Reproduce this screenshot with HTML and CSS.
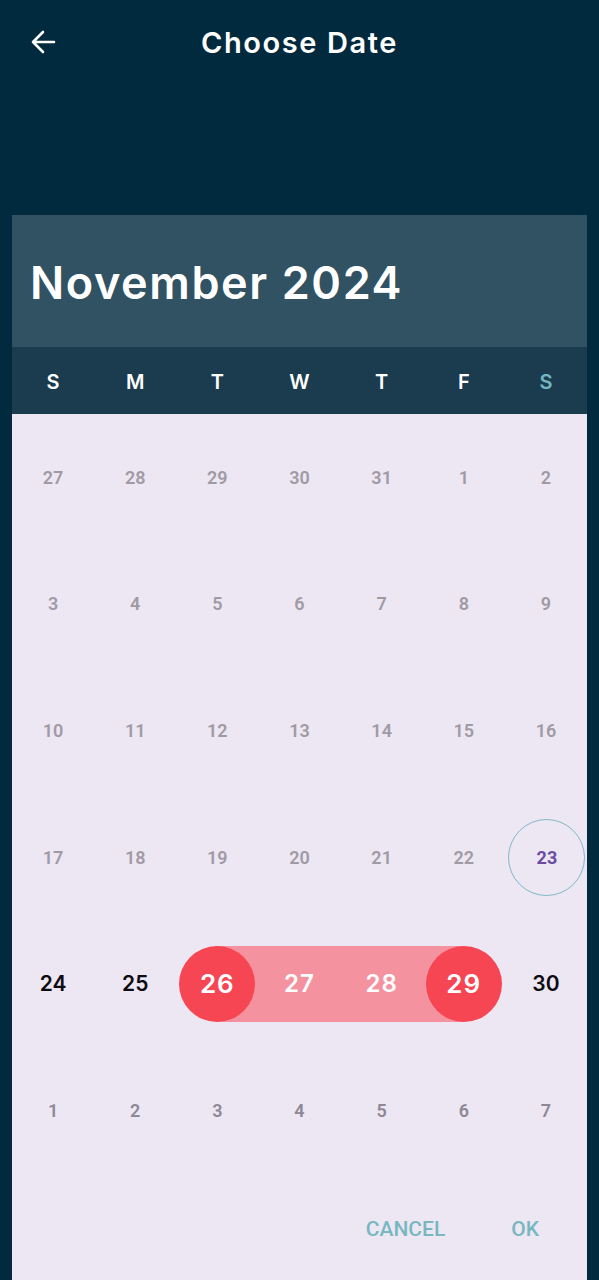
FILE: index.html
```html
<!DOCTYPE html>
<html>
<head>
<meta charset="utf-8">
<link rel="stylesheet" href="styles.css">
</head>
<body>
<div class="appbar">
  <svg class="back" width="26" height="24" viewBox="0 0 26 24"><path d="M24 12H3M13 2L3 12l10 10" fill="none" stroke="#fff" stroke-width="2.6" stroke-linecap="round" stroke-linejoin="round"/></svg>
  <div class="title">Choose Date</div>
</div>
<div class="dialog">
  <div class="header">November 2024</div>
  <div class="weekdays">
    <span>S</span><span>M</span><span>T</span><span>W</span><span>T</span><span>F</span><span class="sat">S</span>
  </div>
  <div class="grid">
    <div class="cell"><span>27</span></div><div class="cell"><span>28</span></div><div class="cell"><span>29</span></div><div class="cell"><span>30</span></div><div class="cell"><span>31</span></div><div class="cell"><span>1</span></div><div class="cell"><span>2</span></div>
    <div class="cell"><span>3</span></div><div class="cell"><span>4</span></div><div class="cell"><span>5</span></div><div class="cell"><span>6</span></div><div class="cell"><span>7</span></div><div class="cell"><span>8</span></div><div class="cell"><span>9</span></div>
    <div class="cell"><span>10</span></div><div class="cell"><span>11</span></div><div class="cell"><span>12</span></div><div class="cell"><span>13</span></div><div class="cell"><span>14</span></div><div class="cell"><span>15</span></div><div class="cell"><span>16</span></div>
    <div class="cell"><span>17</span></div><div class="cell"><span>18</span></div><div class="cell"><span>19</span></div><div class="cell"><span>20</span></div><div class="cell"><span>21</span></div><div class="cell"><span>22</span></div><div class="cell"><span class="today">23</span></div>
    <div class="cell active"><span>24</span></div><div class="cell active"><span>25</span></div>
    <div class="cell"><div class="band start"><span class="sel">26</span></div></div>
    <div class="cell"><div class="band mid"><span class="inrange">27</span></div></div>
    <div class="cell"><div class="band mid"><span class="inrange">28</span></div></div>
    <div class="cell"><div class="band end"><span class="sel">29</span></div></div>
    <div class="cell active"><span>30</span></div>
    <div class="cell next"><span>1</span></div><div class="cell next"><span>2</span></div><div class="cell next"><span>3</span></div><div class="cell next"><span>4</span></div><div class="cell next"><span>5</span></div><div class="cell next"><span>6</span></div><div class="cell next"><span>7</span></div>
  </div>
  <div class="actions">
    <span class="btn">CANCEL</span>
    <span class="btn">OK</span>
  </div>
</div>
</body>
</html>
```

FILE: styles.css
```css
html, body {
  margin: 0;
  padding: 0;
  background: #022a3e;
  height: 1280px;
  overflow: hidden;
}
body {
  font-family: Inter, "Noto Sans", sans-serif;
}
.appbar {
  height: 86px;
  display: flex;
  align-items: center;
  padding: 0 0 0 30px;
  margin-bottom: 129px;
}
.back {
  display: block;
  margin-top: -2px;
}
.title {
  color: #fff;
  font-size: 29px;
  font-weight: 600;
  margin-left: 145px;
  margin-top: -2px;
  letter-spacing: 1.6px;
}
.dialog {
  margin: 0 12px;
  background: #ede7f3;
  height: 1065px;
}
.header {
  background: #305263;
  height: 132px;
  display: flex;
  align-items: center;
  padding-left: 18px;
  color: #fff;
  font-size: 45px;
  font-weight: 600;
  letter-spacing: 1.6px;
  box-sizing: border-box;
  padding-top: 2px;
}
.weekdays {
  background: #1b3c4f;
  height: 67px;
  display: grid;
  grid-template-columns: repeat(7, 1fr);
  align-items: center;
  justify-items: center;
  color: #fff;
  font-size: 20px;
  font-weight: 600;
  padding-top: 2px;
  box-sizing: border-box;
}
.weekdays .sat { color: #74b6c2; }
.grid {
  display: grid;
  grid-template-columns: repeat(7, 1fr);
  grid-auto-rows: 126.6px;
}
.cell {
  display: flex;
  align-items: center;
  justify-content: center;
  color: #a09aa5;
  font-size: 18px;
  font-weight: 600;
  font-family: Roboto, Inter, sans-serif;
}
.cell.active {
  color: #0c0c10;
  font-size: 21px;
  font-family: Inter, sans-serif;
}
.cell.next {
  color: #8e8894;
}
.today {
  width: 75px;
  height: 75px;
  border: 1px solid #7fb8c4;
  border-radius: 50%;
  display: flex;
  align-items: center;
  justify-content: center;
  color: #6b4ca3;
  font-weight: 700;
  margin-left: 2px;
}
.band {
  width: 100%;
  height: 76px;
  display: flex;
  align-items: center;
  justify-content: center;
}
.band.mid { background: #f4939f; }
.band.start { background: linear-gradient(90deg, transparent 50%, #f4939f 50%); }
.band.end { background: linear-gradient(90deg, #f4939f 50%, transparent 50%); }
.sel {
  width: 76px;
  height: 76px;
  border-radius: 50%;
  background: #f64553;
  color: #fff;
  display: flex;
  align-items: center;
  justify-content: center;
  font-size: 26px;
  font-weight: 600;
  letter-spacing: 1px;
  font-family: Inter, sans-serif;
}
.inrange {
  color: #fff;
  font-size: 24px;
  font-weight: 600;
  letter-spacing: 1px;
  font-family: Inter, sans-serif;
}
.actions {
  display: flex;
  justify-content: flex-end;
  align-items: center;
  height: 106px;
  padding-right: 48px;
  gap: 66px;
  margin-top: 2px;
}
.btn {
  color: #78b7c0;
  font-family: Roboto, sans-serif;
  font-weight: 500;
  font-size: 21px;
  letter-spacing: 0;
}
```
